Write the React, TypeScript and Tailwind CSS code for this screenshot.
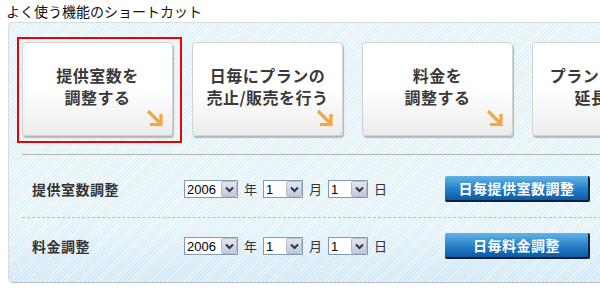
const cards = [
  { l1: '提供室数を', l2: '調整する', active: true },
  { l1: '日毎にプランの', l2: '売止/販売を行う' },
  { l1: '料金を', l2: '調整する' },
  { l1: 'プランの販売を', l2: '延長する' },
]

const Arrow = () => (
  <svg width="18" height="18" viewBox="0 0 18 18" className="absolute right-[8px] bottom-[8px]">
    <path d="M2 2 L15 15 M15 5 L15 16.5 M4 15.5 L16.5 15.5" stroke="#f7a443" strokeWidth="3.2" fill="none" />
  </svg>
)

const Select = ({ value, w }: { value: string; w: string }) => (
  <div className={`flex items-center h-[18px] border border-[#7f9db9] bg-white ${w}`}>
    <span className="flex-1 pl-[2px] text-[13px] leading-none text-black font-['Liberation_Sans',sans-serif]">{value}</span>
    <span className="flex items-center justify-center w-[16px] h-[16px] rounded-[2px] border border-[#b4bccd] bg-gradient-to-b from-[#e3e6ef] to-[#c3c9d9]">
      <svg width="9" height="7" viewBox="0 0 9 7">
        <path d="M1 1.5 L4.5 5 L8 1.5" stroke="#2b3550" strokeWidth="2" fill="none" />
      </svg>
    </span>
  </div>
)

const DateRow = ({ label, button, pt, pb, dotted }: { label: string; button: string; pt: string; pb: string; dotted?: boolean }) => (
  <div className={`flex items-center pl-[10px] ${pt} ${pb} ${dotted ? 'border-b border-dashed border-[#b7bec2]' : ''}`}>
    <span className="w-[152px] text-[14px] font-bold text-[#333] tracking-[0.5px]">{label}</span>
    <Select value="2006" w="w-[54px]" />
    <span className="mx-[6px] text-[13px] text-[#333]">年</span>
    <Select value="1" w="w-[40px]" />
    <span className="mx-[6px] text-[13px] text-[#333]">月</span>
    <Select value="1" w="w-[40px]" />
    <span className="ml-[6px] text-[13px] text-[#333]">日</span>
    <button className="ml-[58px] w-[145px] h-[26px] rounded-[2px] border-r-2 border-b-2 border-[#0d2238] bg-gradient-to-b from-[#62b3e6] via-[#2a83cb] to-[#0b5aa6] text-white text-[14px] font-bold tracking-[0.5px]">
      {button}
    </button>
  </div>
)

export default function App() {
  return (
    <div className="w-[600px] h-[288px] overflow-hidden bg-white font-['Noto_Sans_CJK_JP',sans-serif]">
      <h2 className="pl-[6px] pt-[1px] h-[22px] text-[14px] leading-[20px] text-[#111]">よく使う機能のショートカット</h2>
      <div className="ml-[8px] w-[640px] h-[261px] rounded-[5px] border border-[#d3dde2] border-b-[#b8c0c4] bg-[image:repeating-linear-gradient(135deg,rgba(255,255,255,0.55)_0px,rgba(255,255,255,0.55)_1px,transparent_1px,transparent_3px),linear-gradient(to_bottom,#e4f3f8_0%,#e4f3f8_78%,#d1e8f8_100%)]">
        <div className="flex gap-[19px] pl-[13px] pt-[19px]">
          {cards.map((c) => (
            <div key={c.l1} className="relative shrink-0">
              {c.active && <div className="absolute -left-[5px] -top-[5px] w-[165px] h-[106px] border-2 border-[#ee0000]" />}
              <div className="relative w-[151px] h-[94px] rounded-[4px] border border-[#cfd3d5] bg-gradient-to-b from-white via-white to-[#ececec] shadow-[1px_2px_1px_#b5b8ba] flex flex-col items-center justify-center pb-[6px] text-[16px] leading-[22px] font-bold text-[#3a3a3a] tracking-[0.5px]">
                <span>{c.l1}</span>
                <span>{c.l2}</span>
                <Arrow />
              </div>
            </div>
          ))}
        </div>
        <div className="ml-[13px] mt-[18px] border-t border-[#b3b3b3]">
          <DateRow label="提供室数調整" button="日毎提供室数調整" pt="pt-[21px]" pb="pb-[15px]" dotted />
          <DateRow label="料金調整" button="日毎料金調整" pt="pt-[15px]" pb="pb-[15px]" />
        </div>
      </div>
    </div>
  )
}
